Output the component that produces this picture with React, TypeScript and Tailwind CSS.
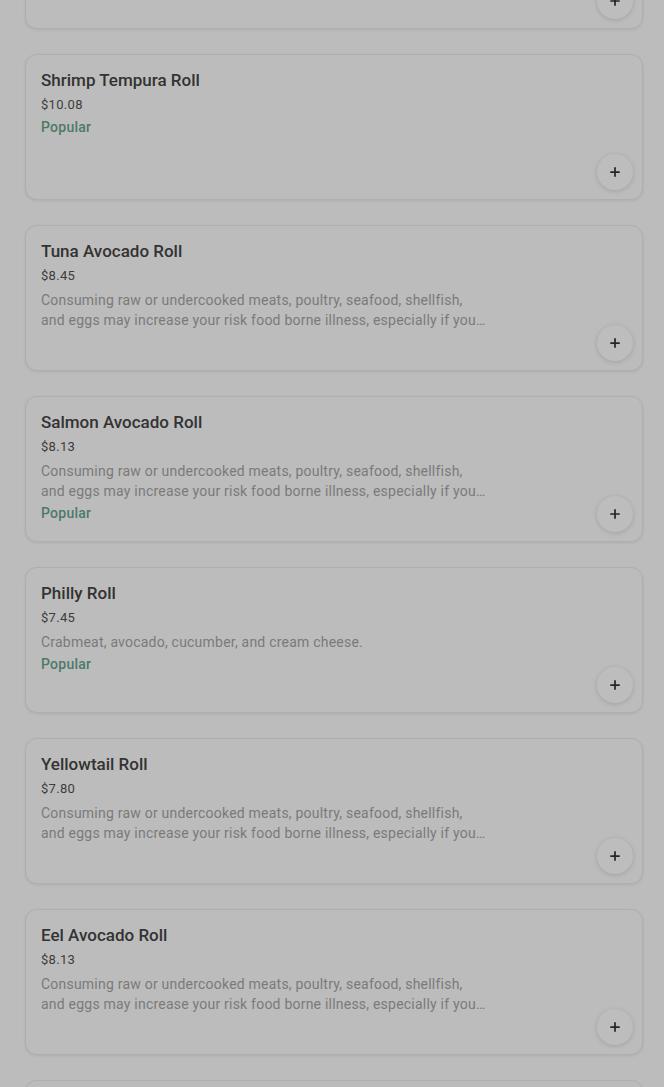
import { Plus } from "lucide-react";

type Item = {
  name: string;
  price: string;
  desc?: string;
  popular?: boolean;
};

const WARNING =
  "Consuming raw or undercooked meats, poultry, seafood, shellfish, and eggs may increase your risk food borne illness, especially if you have certain medical conditions.";

const items: Item[] = [
  { name: "California Roll", price: "$6.95" },
  { name: "Shrimp Tempura Roll", price: "$10.08", popular: true },
  { name: "Tuna Avocado Roll", price: "$8.45", desc: WARNING },
  { name: "Salmon Avocado Roll", price: "$8.13", desc: WARNING, popular: true },
  {
    name: "Philly Roll",
    price: "$7.45",
    desc: "Crabmeat, avocado, cucumber, and cream cheese.",
    popular: true,
  },
  { name: "Yellowtail Roll", price: "$7.80", desc: WARNING },
  { name: "Eel Avocado Roll", price: "$8.13", desc: WARNING },
  { name: "Spicy Tuna Roll", price: "$8.45", desc: WARNING },
];

function MenuCard({ item }: { item: Item }) {
  return (
    <div className="relative h-[146px] rounded-xl border border-[#afafaf] bg-[#bcbcbc] px-[15px] pt-[14px] shadow-[0_1px_3px_rgba(0,0,0,0.08)]">
      <h3 className="text-[17px] font-medium leading-[22px] text-[#333333]">
        {item.name}
      </h3>
      <p className="mt-1 text-[13px] leading-5 tracking-[0.3px] text-[#3c3c3c]">
        {item.price}
      </p>
      {item.desc && (
        <p className="mt-1 line-clamp-2 max-w-[446px] text-[14px] leading-5 tracking-[0.22px] text-[#7a7a7a]">
          {item.desc}
        </p>
      )}
      {item.popular && (
        <p className="mt-[2px] text-[14px] font-medium leading-5 tracking-[0.25px] text-[#4c7a67]">
          Popular
        </p>
      )}
      <button className="absolute bottom-[9px] right-[9px] flex h-9 w-9 items-center justify-center rounded-full bg-[#bdbdbd] shadow-[0_1px_5px_rgba(0,0,0,0.14)]">
        <Plus size={14} strokeWidth={3} className="text-[#262626]" />
      </button>
    </div>
  );
}

export default function App() {
  return (
    <div
      className="h-[1087px] overflow-hidden bg-[#bcbcbc]"
      style={{ fontFamily: "Roboto, 'Liberation Sans', sans-serif" }}
    >
      <div className="-mt-[117px] ml-[25px] mr-[21px] flex flex-col gap-[25px]">
        {items.map((item) => (
          <MenuCard key={item.name} item={item} />
        ))}
      </div>
    </div>
  );
}
